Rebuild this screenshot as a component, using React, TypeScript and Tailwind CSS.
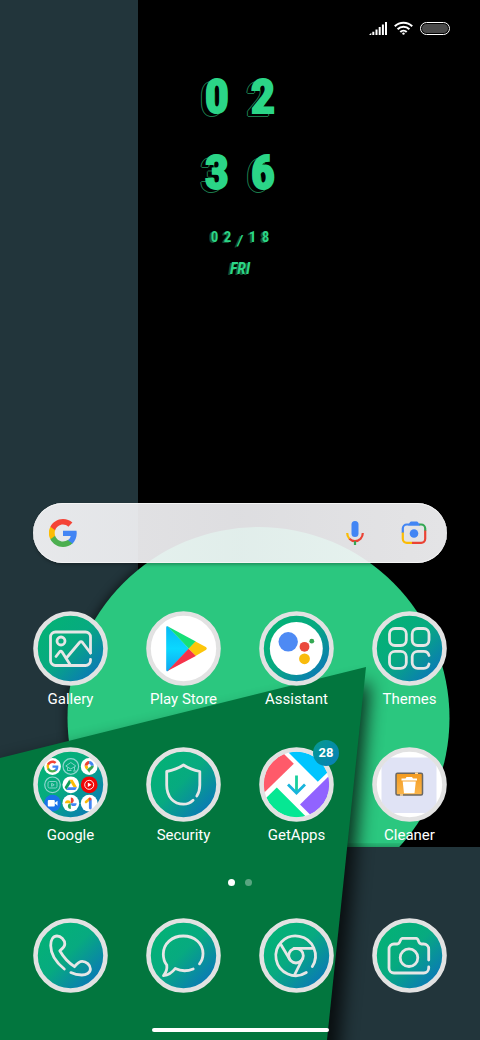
import type { ReactNode } from "react";

const LINE = {
  fill: "none",
  stroke: "#e6e6e6",
  strokeWidth: 2.8,
  strokeLinecap: "round",
  strokeLinejoin: "round",
} as const;

function GoogleG() {
  return (
    <>
      <path fill="#4285f4" d="M47.500 24.600c0-1.600-.15-3.200-.4-4.600H24v9.100h13.200c-.6 3-2.300 5.500-4.900 7.200v6h7.900c4.600-4.300 7.300-10.500 7.300-17.700z" />
      <path fill="#4caf50" d="M24 48c6.500 0 12-2.100 16.100-5.800l-7.900-6c-2.200 1.500-5 2.300-8.200 2.300-6.300 0-11.600-4.200-13.500-9.900H2.400v6.200C6.400 42.600 14.600 48 24 48z" />
      <path fill="#fbbc05" d="M10.500 28.600a14.400 14.400 0 0 1 0-9.200v-6.200H2.400a24 24 0 0 0 0 21.600z" />
      <path fill="#f44336" d="M24 9.500c3.500 0 6.700 1.200 9.200 3.600l6.900-6.900C35.900 2.400 30.500 0 24 0 14.600 0 6.400 5.400 2.400 13.200l8.100 6.200C12.400 13.700 17.700 9.500 24 9.500z" />
    </>
  );
}

function Gallery() {
  return (
    <g {...LINE}>
      <path d="M57.500 42V26a5 5 0 0 0-5-5h-30a5 5 0 0 0-5 5v23.500a5 5 0 0 0 5 5h30a5 5 0 0 0 5-5v-1" />
      <circle cx="28" cy="30" r="4" />
      <path d="M23 45.500l3.500-4.500c.8-1 1.800-1 2.600 0L37 53.500M33 47.500l13.500-16c1-1.200 2-1.200 3 0l8 10.500" />
    </g>
  );
}

function PlayStore() {
  return (
    <>
      <path d="M22 15.500c-1-.6-1.800-.2-1.800 1.200v42c0 1.400.8 1.800 1.800 1.200l21-22.200z" fill="url(#playBlue)" />
      <path d="M21.500 15.300l28.300 15.300-6.900 7.100z" fill="#16df77" />
      <path d="M49.500 30.400l10.300 5.700c1.300.8 1.300 2 0 2.800l-10.300 6.200-6.900-7.400z" fill="#fdc60b" />
      <path d="M21.500 60.100l28.300-15-7.200-7.400z" fill="#f5334a" />
    </>
  );
}

function Assistant() {
  return (
    <>
      <circle cx="37.300" cy="37.500" r="26.500" fill="#fff" />
      <circle cx="29.200" cy="30.800" r="9.700" fill="#4e8af4" />
      <circle cx="45.500" cy="35.800" r="4.900" fill="#ea4a3c" />
      <circle cx="52.800" cy="30.200" r="2.400" fill="#34a853" />
      <circle cx="45.500" cy="47.800" r="5.400" fill="#f9bb0d" />
    </>
  );
}

function Themes() {
  return (
    <g {...LINE}>
      <rect x="17.500" y="17.500" width="16.800" height="17" rx="5.500" />
      <rect x="40.200" y="17.500" width="16.800" height="17" rx="5.500" />
      <rect x="17.500" y="40.300" width="16.800" height="17" rx="5.500" />
      <path d="M57 44.500a5.500 5.500 0 0 0-5.500-4.200h-5.800a5.500 5.500 0 0 0-5.500 5.500v6a5.500 5.500 0 0 0 5.500 5.500h5.800A5.500 5.500 0 0 0 57 53" />
    </g>
  );
}

function GoogleFolder() {
  const white = [[19.5, 19.5], [56.2, 19.5], [37.8, 37.8], [37.8, 56.2], [56.2, 56.2]];
  const thin = { fill: "none", stroke: "#8fd6cf", strokeWidth: 0.9 };
  return (
    <>
      {white.map(([cx, cy]) => (
        <circle key={`${cx}-${cy}`} cx={cx} cy={cy} r="8.400" fill="#fff" />
      ))}
      <g transform="translate(13.500 13.500) scale(.25)">
        <GoogleG />
      </g>
      <g {...thin}>
        <circle cx="37.800" cy="19.500" r="7.800" strokeWidth="1.200" />
        <path d="M32.800 19l5-3.500 5 3.500-5 3zM34.500 20.500v3h4M41.500 20v3.500M40 24h3" />
        <circle cx="19.500" cy="37.800" r="7.800" strokeWidth="1.200" />
        <rect x="15" y="34.500" width="9" height="6.500" rx="1.500" />
        <path d="M18.600 36.300l2.600 1.500-2.600 1.500z" />
      </g>
      {/* maps pin */}
      <path d="M51.600 18.700a4.600 4.600 0 0 1 4.600-4.600v4.600z" fill="#ea4335" />
      <path d="M56.200 14.100a4.600 4.600 0 0 1 4.600 4.600h-4.600z" fill="#4285f4" />
      <path d="M51.600 18.700c0 2 1.200 3 2.300 4.300l2.300-4.300z" fill="#fbbc05" />
      <path d="M60.800 18.700c0 3-3.500 3.700-4.600 7.300-.5-1.600-1.300-2.300-2.300-3.300l4-4z" fill="#34a853" />
      <circle cx="56.200" cy="18.700" r="1.600" fill="#fff" />
      {/* drive */}
      <path d="M36.200 32.800h3.400L44 40.200h-3.500z" fill="#fbbc05" />
      <path d="M36.200 32.800l1.700 3-4.600 7.300-1.700-2.900z" fill="#0f9d58" />
      <path d="M35 40.200h9l-1.700 2.900h-9z" fill="#4285f4" />
      {/* music */}
      <circle cx="56.200" cy="37.800" r="8.400" fill="#f00505" />
      <circle cx="56.200" cy="37.800" r="4.500" fill="none" stroke="#fff" strokeWidth=".9" />
      <path d="M54.800 35.600l3.700 2.200-3.700 2.200z" fill="#fff" />
      {/* meet */}
      <circle cx="19.500" cy="56.200" r="8.400" fill="#1a73e8" />
      <rect x="14.800" y="53" width="7" height="6.400" rx="1" fill="#fff" />
      <path d="M21.500 56l3-2.300v5z" fill="#fff" />
      {/* photos */}
      <path d="M37.800 50.400a2.900 2.900 0 0 1 0 5.800z" fill="#ea4335" />
      <path d="M43.600 56.200a2.900 2.900 0 0 1-5.800 0z" fill="#4285f4" />
      <path d="M37.800 62a2.900 2.900 0 0 1 0-5.800z" fill="#34a853" />
      <path d="M32 56.200a2.900 2.900 0 0 1 5.800 0z" fill="#fbbc05" />
      {/* one */}
      <path d="M53 55l3.500-3" stroke="#fbbc05" strokeWidth="2.600" strokeLinecap="round" />
      <path d="M57.300 53v8" stroke="#4285f4" strokeWidth="2.800" strokeLinecap="round" />
      <circle cx="57" cy="52" r="1.500" fill="#ea4335" />
    </>
  );
}

function Security() {
  return (
    <path {...LINE} d="M50.800 49c2-3 3-6.500 3-11V24.500c-6-1.200-11-3-16.300-6.500-5.300 3.500-10.300 5.300-16.800 6.500V38c0 12 7 19.200 16.800 19.200 3.600 0 7-1.500 9.600-4" />
  );
}

function GetApps() {
  return (
    <g clipPath="url(#disc)">
      <path d="M0 50.500l34.800-33.700L18 0H0z" fill="#ff5a6a" />
      <path d="M24 0l34.800 34.800L75 19V0z" fill="#00c5ff" />
      <path d="M41 57.500l34-33.500v51H58.500z" fill="#9163ff" />
      <path d="M0 58l17.800-17.500L52.300 75H0z" fill="#06e793" />
      <path d="M37.500 28.500V44" stroke="#19cf9c" strokeWidth="2.800" />
      <path d="M29 37.500l8.500 8.500 8.500-8.500" fill="none" stroke="#17b4dc" strokeWidth="2.800" />
    </g>
  );
}

function Cleaner() {
  return (
    <g clipPath="url(#disc)">
      <rect x="9.500" y="10.500" width="55" height="55.500" rx="8" fill="#e0e3f5" />
      <rect x="24" y="26.300" width="26.500" height="21.700" rx="1.500" fill="url(#orange)" stroke="#6a6762" strokeWidth="1.500" />
      <path d="M43 26.300h3M28 48h3" stroke="#ffd9a0" strokeWidth="1.600" />
      <path d="M29.500 31.500h4l1-1.500h5.500l1 1.500h4v2h-15.500zM30.700 34.500h13.100l-1.300 11.700H32z" fill="#fff" />
    </g>
  );
}

function Phone() {
  return (
    <path {...LINE} d="M31.300 51C22 43.500 17.700 36 17.700 27.500c0-6 2.600-9.500 6.300-9.500 4 0 7.800 4 7.800 8 0 3.300-2.300 4.600-5 6.800 3.700 6.500 8.300 11.700 14.700 15.900 2.400-3 4.300-5.300 7.700-5.300 4 0 8.200 3.500 8.200 7.600 0 4-4.400 6-8.600 6-3.800 0-7.600-.8-11-2.400" />
  );
}

function Messages() {
  return (
    <path {...LINE} d="M47.200 51c-6 2.400-12.500 2.200-18-.5-3 4-6.500 6.700-11.700 7.200 2.500-3 3.800-6.500 3.300-10.500-2.200-3-3.500-6.900-3.500-11C17.300 25.500 26 18 37.300 18S57 25.500 57 35.500c0 4-1.200 7.500-3.500 10.300" />
  );
}

function Chrome() {
  return (
    <g {...LINE}>
      <path d="M53.300 48.500a19.800 19.800 0 1 0-6 6" />
      <circle cx="37" cy="37.700" r="7.300" />
      <path d="M35 30.400h19.500M22 26.700l9 15M43.700 40.500L35.500 57" />
    </g>
  );
}

function Camera() {
  return (
    <g {...LINE}>
      <path d="M56.700 42V31a5 5 0 0 0-5-5h-2.200c-4 0-2.200-5.700-5.300-5.700H30.500c-3.100 0-1.500 5.700-5.300 5.700h-3.200a5 5 0 0 0-5 5v19a5 5 0 0 0 5 5h29.700a5 5 0 0 0 5-5v-1" />
      <circle cx="37" cy="39.700" r="8.800" />
    </g>
  );
}

type App = { name: string; icon: ReactNode; plain?: boolean; badge?: number };

const APPS: App[] = [
  { name: "Gallery", icon: <Gallery /> },
  { name: "Play Store", icon: <PlayStore />, plain: true },
  { name: "Assistant", icon: <Assistant /> },
  { name: "Themes", icon: <Themes /> },
  { name: "Google", icon: <GoogleFolder /> },
  { name: "Security", icon: <Security /> },
  { name: "GetApps", icon: <GetApps />, plain: true, badge: 28 },
  { name: "Cleaner", icon: <Cleaner />, plain: true },
];

const DOCK: App[] = [
  { name: "Phone", icon: <Phone /> },
  { name: "Messages", icon: <Messages /> },
  { name: "Chrome", icon: <Chrome /> },
  { name: "Camera", icon: <Camera /> },
];

function AppButton({ app, label = true }: { app: App; label?: boolean }) {
  return (
    <button type="button" aria-label={app.name} className="flex flex-col items-center gap-[3px]">
      <span className="relative block size-[75px]">
        <svg viewBox="0 0 75 75" className="size-full">
          <circle cx="37.500" cy="37.500" r="35" fill={app.plain ? "#fff" : "url(#tile)"} />
          {app.icon}
          <circle cx="37.500" cy="37.500" r="35" fill="none" stroke="#e2e2e2" strokeWidth="4.600" />
        </svg>
        {app.badge && (
          <span className="absolute -top-[7px] -right-[5px] flex size-[26px] items-center justify-center rounded-full bg-linear-to-br from-[#0b9a8c] to-[#0d7dba] text-[13px] font-bold">
            {app.badge}
          </span>
        )}
      </span>
      {label && <span className="text-[15px] leading-5">{app.name}</span>}
    </button>
  );
}

function Clock() {
  return (
    <div className="mt-[3px] flex flex-col items-center font-['Liberation_Sans_Narrow','Roboto_Condensed','Liberation_Sans',sans-serif] font-bold text-[#2bd587]">
      {/* the shadows draw a hollow copy of each digit, down and to the left */}
      {["02", "36"].map((pair) => (
        <div
          key={pair}
          className="flex h-[76px] items-center text-[48px] leading-none [-webkit-text-stroke:2px_#2bd587] [text-shadow:-5px_3px_0_#000,-6px_3px_0_#1b7a4b,-4px_3px_0_#1b7a4b,-5px_4px_0_#1b7a4b,-5px_2px_0_#1b7a4b]"
        >
          {pair.split("").map((d) => (
            <span key={d} className="w-[46px] text-center">
              {d}
            </span>
          ))}
        </div>
      ))}
      <div className="mt-[10px] flex h-8 items-center text-[15px] leading-none [text-shadow:-2px_1px_0_#14502f]">
        {"02/18".split("").map((c, i) => (
          <span key={i} className={c === "/" ? "w-3 pt-2 text-center italic" : "w-[13px] text-center"}>
            {c}
          </span>
        ))}
      </div>
      <div className="flex h-8 items-center text-[16px] leading-none italic [text-shadow:-2px_1px_0_#14502f]">FRI</div>
    </div>
  );
}

function StatusBar() {
  return (
    <header className="flex h-14 items-center justify-end gap-[7px] pr-[30px]">
      <svg viewBox="0 0 18 13" className="h-[13px] w-[18px]" fill="#fff">
        <path d="M0 13l2.300-2.300V13zM3.300 9.700h2V13h-2zM6.500 7.500h2V13h-2zM9.700 5h2v8h-2zM12.900 2.500h2V13h-2zM16 0h2v13h-2z" />
      </svg>
      <svg viewBox="0 0 19 14" className="h-[14px] w-[19px]" fill="none" stroke="#fff" strokeWidth="2.100">
        <path d="M.8 5.200a12.500 12.500 0 0 1 17.400 0M3.600 8.200a8.400 8.400 0 0 1 11.800 0M6.300 11a4.600 4.600 0 0 1 6.400 0" />
        <circle cx="9.500" cy="12.600" r="1.200" fill="#fff" stroke="none" />
      </svg>
      <span className="h-[13px] w-[30px] rounded-full border border-white p-px">
        <span className="block size-full rounded-full bg-[#4a4a4a]" />
      </span>
    </header>
  );
}

function SearchBar() {
  return (
    <form className="mx-[33px] mt-auto flex h-[60px] items-center rounded-full bg-linear-to-r from-[#f8f8fa]/92 via-[#f1f1f4]/92 to-[#f8f8fa]/92 pr-5 pl-4 shadow-[inset_0_1px_0_#f4f4f4,inset_0_-1px_0_#f4f4f4,0_2px_3px_rgba(0,0,0,0.25)]">
      <svg viewBox="0 0 48 48" className="size-7">
        <GoogleG />
      </svg>
      <input aria-label="Search" className="min-w-0 flex-1 bg-transparent px-3 text-[#333] outline-none" />
      <button type="button" aria-label="Voice search">
        <svg viewBox="0 0 20 26" className="h-[26px] w-5" fill="none" strokeWidth="2.200">
          <rect x="6.500" y="1" width="7" height="16" rx="3.500" fill="#4285f4" />
          <path d="M2.200 13c0 2.500.9 4.300 2.200 5.700" stroke="#fbbc05" />
          <path d="M4.400 18.700C7.700 22 12.300 22 15.600 18.700c1.300-1.400 2.200-3.200 2.200-5.700" stroke="#ea4335" />
          <path d="M10 21.200V25" stroke="#34a853" />
        </svg>
      </button>
      <button type="button" aria-label="Search by image" className="ml-9">
        <svg viewBox="0 0 26 24" className="h-6 w-[26px]" fill="none" strokeWidth="2.200">
          <path d="M1.800 12V7.500a4 4 0 0 1 4-4H19" stroke="#4285f4" />
          <path d="M7 4.500C8.500 3 8.500.5 10.500.5h5c2 0 2 2.500 3.500 4z" fill="#4285f4" />
          <path d="M18.500 3.500h1.700a4 4 0 0 1 4 4V10" stroke="#34a853" />
          <path d="M24.200 9.500v8.300a4 4 0 0 1-4 4H11" stroke="#ea4335" />
          <path d="M1.800 11.500v6.300a4 4 0 0 0 4 4H11" stroke="#fbbc05" />
          <circle cx="13" cy="12.500" r="4.300" fill="#4285f4" />
        </svg>
      </button>
    </form>
  );
}

function Wallpaper() {
  return (
    <svg viewBox="0 0 480 1040" preserveAspectRatio="xMidYMax slice" className="absolute inset-0 size-full" aria-hidden="true">
      <defs>
        <linearGradient id="tile" x1=".15" y1=".15" x2=".92" y2=".92">
          <stop offset="0" stopColor="#04b176" />
          <stop offset=".42" stopColor="#07aa80" />
          <stop offset="1" stopColor="#0b72be" />
        </linearGradient>
        <linearGradient id="playBlue" x1="0" y1="0" x2="0" y2="1">
          <stop offset="0" stopColor="#08b8f4" />
          <stop offset=".5" stopColor="#0ad8ff" />
          <stop offset="1" stopColor="#12a6ee" />
        </linearGradient>
        <linearGradient id="orange" x1="0" y1="0" x2="0" y2="1">
          <stop offset="0" stopColor="#f39a1f" />
          <stop offset="1" stopColor="#fbb64c" />
        </linearGradient>
        <clipPath id="disc">
          <circle cx="37.500" cy="37.500" r="33" />
        </clipPath>
        <filter id="soft" x="-20%" y="-20%" width="140%" height="140%">
          <feGaussianBlur stdDeviation="5" />
        </filter>
        <filter id="softer" x="-20%" y="-20%" width="140%" height="140%">
          <feGaussianBlur stdDeviation="9" />
        </filter>
      </defs>
      <rect width="480" height="1040" fill="#000" />
      <rect width="138" height="1040" fill="#22353b" />
      <circle cx="258.500" cy="718" r="193" fill="#000" opacity=".5" filter="url(#soft)" />
      <circle cx="258.500" cy="718" r="191" fill="#2bc77f" />
      <rect x="200" y="847" width="280" height="20" fill="#000" opacity=".4" filter="url(#soft)" />
      <rect y="847" width="480" height="193" fill="#22353b" />
      <path d="M0 766L370 682 338 1060H0z" fill="#000" opacity=".75" filter="url(#softer)" />
      <path d="M0 758L366 667 327 1040H0z" fill="#02763e" />
    </svg>
  );
}

export default function App() {
  return (
    <div className="relative min-h-screen overflow-hidden bg-black font-[Roboto,sans-serif] text-white">
      <Wallpaper />
      <div className="relative flex min-h-screen flex-col">
        <StatusBar />
        <Clock />
        <SearchBar />
        <main className="mt-12 grid grid-cols-4 gap-y-[38px] px-[14px]">
          {APPS.map((app) => (
            <AppButton key={app.name} app={app} />
          ))}
        </main>
        <div className="mt-[34px] flex justify-center gap-[10px]">
          <span className="size-[7px] rounded-full bg-white" />
          <span className="size-[7px] rounded-full bg-white/35" />
        </div>
        <nav className="mt-8 grid grid-cols-4 px-[14px]">
          {DOCK.map((app) => (
            <AppButton key={app.name} app={app} label={false} />
          ))}
        </nav>
        <div className="mx-auto mt-[35px] mb-2 h-1 w-[177px] rounded-full bg-white" />
      </div>
    </div>
  );
}
